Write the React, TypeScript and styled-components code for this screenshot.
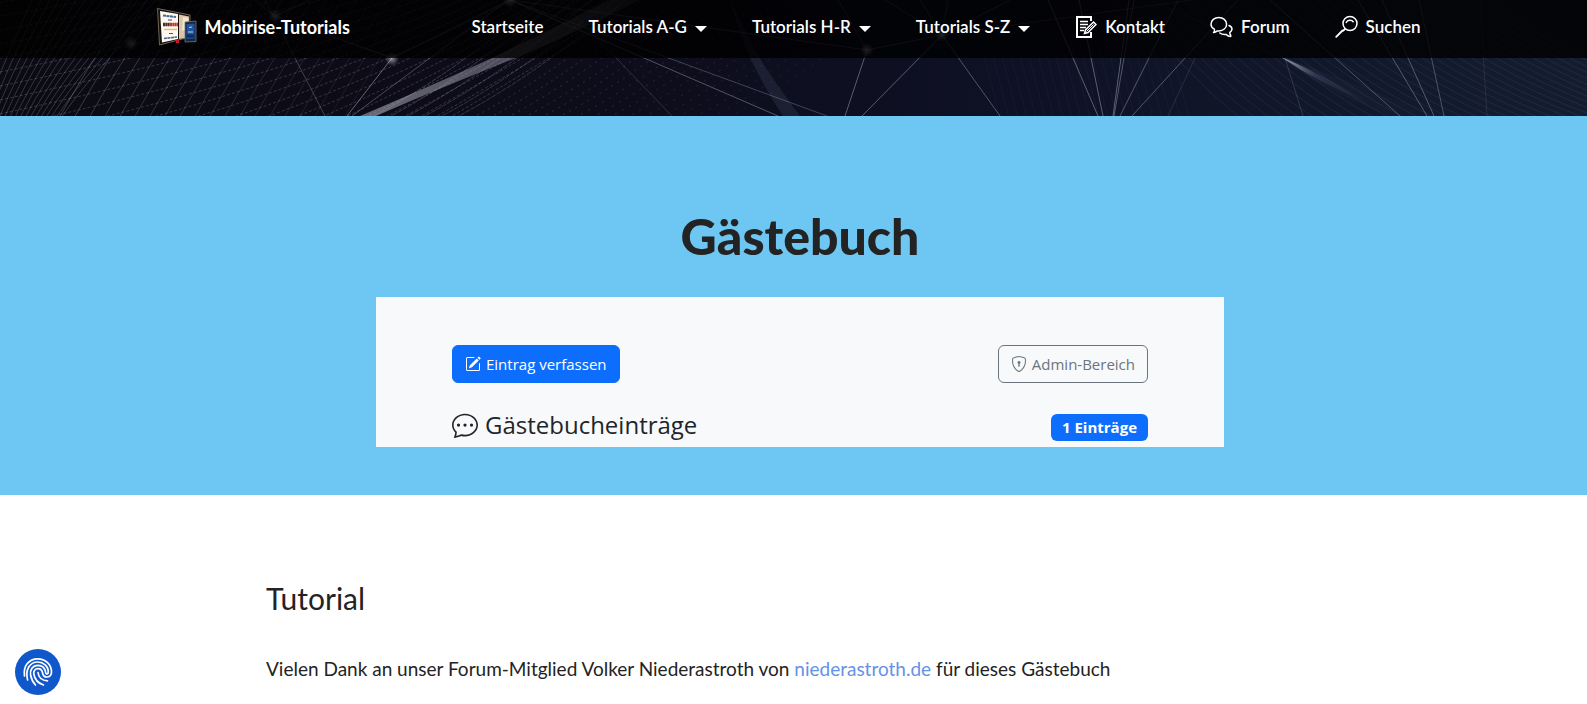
import React from "react";
import styled, { createGlobalStyle } from "styled-components";
import { BsPencilSquare, BsShieldLock, BsChatDots } from "react-icons/bs";

const GlobalStyle = createGlobalStyle`
  *, *::before, *::after { box-sizing: border-box; }
  body {
    margin: 0;
    background: #ffffff;
    color: #232323;
    font-family: Lato, "Liberation Sans", sans-serif;
  }
  a { text-decoration: none; }
`;

const Header = styled.header`
  position: relative;
  overflow: hidden;
  padding-bottom: 58px;
  background: #0e1020;
`;

const Backdrop = styled.svg`
  position: absolute;
  inset: 0;
  width: 100%;
  height: 100%;
`;

const Navbar = styled.nav`
  position: relative;
  height: 58px;
  padding: 0 12px;
  background: rgba(0, 0, 0, 0.8);
`;

const NavInner = styled.div`
  display: flex;
  align-items: center;
  justify-content: space-between;
  max-width: 1274px;
  height: 54px;
  margin: 0 auto;
  padding-right: 10px;
`;

const Brand = styled.a`
  display: flex;
  align-items: center;
  gap: 8px;
  color: #ffffff;
  font-size: 18px;
  font-weight: 700;
  line-height: 24px;
  white-space: nowrap;
`;

const NavList = styled.ul`
  display: flex;
  align-items: center;
  gap: 45px;
  margin: 0;
  padding: 0;
  list-style: none;
`;

const NavLink = styled.a`
  display: flex;
  align-items: center;
  gap: 8px;
  color: #ffffff;
  font-size: 17px;
  font-weight: 600;
  line-height: 24px;
  white-space: nowrap;
`;

const Caret = styled.span`
  border: 6px solid transparent;
  border-top-color: #ffffff;
  border-bottom: 0;
  margin-top: 4px;
`;

const Guestbook = styled.section`
  display: flex;
  flex-direction: column;
  align-items: center;
  gap: 28px;
  padding: 88px 12px 48px 25px;
  background: #6ec6f3;
`;

const Title = styled.h1`
  margin: 0;
  font-size: 50px;
  font-weight: 900;
  line-height: 65px;
`;

const Card = styled.div`
  display: flex;
  flex-direction: column;
  gap: 26px;
  width: 100%;
  max-width: 848px;
  padding: 48px 76px 6px;
  background: #f8f9fa;
  color: #212529;
  font-family: "Open Sans", "Noto Sans", sans-serif;
`;

const CardRow = styled.div`
  display: flex;
  align-items: flex-end;
  justify-content: space-between;
`;

const Button = styled.button<{ $outline?: boolean }>`
  display: flex;
  align-items: center;
  gap: 5px;
  height: 38px;
  padding: 0 12px;
  border: 1px solid ${(p) => (p.$outline ? "#6c757d" : "#0d6efd")};
  border-radius: 6px;
  background: ${(p) => (p.$outline ? "transparent" : "#0d6efd")};
  color: ${(p) => (p.$outline ? "#6c757d" : "#ffffff")};
  font-family: inherit;
  font-size: 15px;
  line-height: 24px;
  white-space: nowrap;
`;

const EntriesHeading = styled.h2`
  display: flex;
  align-items: center;
  gap: 7px;
  margin: 0;
  font-size: 24px;
  font-weight: 400;
  line-height: 32px;
`;

const Badge = styled.span`
  padding: 0 11px;
  border-radius: 6px;
  background: #0d6efd;
  color: #ffffff;
  font-size: 15px;
  font-weight: 700;
  line-height: 27px;
`;

const Tutorial = styled.main`
  max-width: 1079px;
  margin: 0 auto;
  padding: 82px 12px 16px;
`;

const TutorialTitle = styled.h2`
  margin: 0 0 36px;
  font-size: 30px;
  font-weight: 400;
  line-height: 42px;
`;

const Text = styled.p`
  margin: 0;
  font-size: 19px;
  line-height: 28px;
`;

const TextLink = styled.a`
  color: #6592e6;
`;

const PrivacyButton = styled.button`
  position: fixed;
  left: 15px;
  bottom: 9px;
  width: 46px;
  height: 46px;
  padding: 0;
  border: 0;
  border-radius: 50%;
  background: #1157cc;
`;

type Seg = [number, number, number, number, number];

const rays: Seg[] = [
  [265, 0, 325, 116, 0.3],
  [392, 58, 347, 116, 0.5],
  [508, 0, 352, 116, 0.35],
  [392, 58, 275, 16, 0.35],
  [392, 58, 510, 0, 0.35],
  [275, 16, 255, 0, 0.3],
  [275, 16, 310, 0, 0.3],
  [510, 0, 778, 116, 0.4],
  [510, 0, 827, 116, 0.3],
  [510, 0, 867, 50, 0.3],
  [560, 0, 672, 116, 0.2],
  [867, 50, 845, 116, 0.45],
  [867, 50, 838, 0, 0.3],
  [867, 50, 942, 35, 0.3],
  [942, 35, 862, 116, 0.45],
  [942, 35, 1000, 116, 0.4],
  [942, 35, 885, 0, 0.3],
  [942, 35, 920, 0, 0.3],
  [942, 35, 948, 0, 0.3],
  [942, 35, 1010, 0, 0.3],
  [942, 35, 1220, -4, 0.25],
  [1048, 0, 1098, 116, 0.45],
  [1079, 0, 1103, 116, 0.45],
  [1129, 0, 1113, 116, 0.45],
  [1134, 0, 1114, 116, 0.4],
  [1178, 0, 1120, 116, 0.4],
  [1238, 0, 1132, 116, 0.4],
  [1195, 58, 1168, 116, 0.15],
  [1270, 0, 1400, 116, 0.35],
  [1358, 0, 1427, 116, 0.4],
  [1382, 0, 1434, 116, 0.4],
  [1419, 0, 1444, 116, 0.35],
  [1285, 58, 1303, 116, 0.2],
  [1480, 0, 1487, 116, 0.12],
];

const range = (n: number) => Array.from({ length: n }, (_, i) => i);

function NetworkBackdrop() {
  return (
    <Backdrop viewBox="0 0 1587 116" preserveAspectRatio="xMidYMid slice" aria-hidden="true">
      <defs>
        <linearGradient id="base">
          <stop offset="0" stopColor="#0b0b13" />
          <stop offset="0.35" stopColor="#0d0c19" />
          <stop offset="0.6" stopColor="#0e1023" />
          <stop offset="1" stopColor="#141d30" />
        </linearGradient>
        <linearGradient id="beam" x1="0" x2="1">
          <stop offset="0" stopColor="#b4b4c4" stopOpacity="0.55" />
          <stop offset="0.6" stopColor="#a0a0b4" stopOpacity="0.42" />
          <stop offset="1" stopColor="#a0a0b4" stopOpacity="0.2" />
        </linearGradient>
        <linearGradient id="flare">
          <stop offset="0" stopColor="#ccd2e6" stopOpacity="0.75" />
          <stop offset="0.4" stopColor="#7884a4" stopOpacity="0.22" />
          <stop offset="1" stopColor="#56648a" stopOpacity="0" />
        </linearGradient>
        <radialGradient id="node">
          <stop offset="0" stopColor="#ffffff" stopOpacity="0.5" />
          <stop offset="1" stopColor="#ffffff" stopOpacity="0" />
        </radialGradient>
      </defs>
      <rect width="1587" height="116" fill="url(#base)" />
      <g fill="none" stroke="#a9adc4">
        {range(16).map((i) => (
          <path key={i} d={`M${i * 5 - 18} 124Q${i * 6 - 4} 78 ${i * 9 + 34} -4`} strokeOpacity="0.26" />
        ))}
        {range(20).map((i) => (
          <path key={i} d={`M${i * 15 + 58} 120Q${i * 15 + 82} 76 ${i * 15 + 132} 0`} strokeOpacity={0.3 - i * 0.011} />
        ))}
        {range(24).map((i) => (
          <path
            key={i}
            d={`M-10 ${i * 14 + 4}Q190 ${i * 13 - 30} 360 ${i * 10 - 60}T620 ${i * 8 - 170}`}
            strokeOpacity="0.26"
            strokeDasharray="3 2"
          />
        ))}
        {range(22).map((i) => (
          <path
            key={i}
            d={`M${i * 17 + 370} 118Q${i * 17 + 450} 76 ${i * 17 + 540} 0`}
            strokeOpacity={0.3 - i * 0.009}
            strokeDasharray={i < 6 ? "5 1" : `2 ${3 + Math.floor(i / 4)}`}
          />
        ))}
        {range(34).map((i) => (
          <path key={i} d={`M${i * 11 + 1130} 0Q${i * 12 + 1180} 70 ${i * 15 + 1240} 118`} stroke="#586680" strokeOpacity="0.18" />
        ))}
        {range(22).map((i) => (
          <path key={i} d={`M${i * 9 + 980} 40L${i * 9 + 1000} 118`} stroke="#586680" strokeOpacity="0.1" />
        ))}
      </g>
      <path d="M360 116Q440 82 492 58L610 0H640Q570 35 516 58Q450 84 376 116Z" fill="url(#beam)" />
      <path d="M730 0Q745 60 783 116H800Q770 76 755 50Z" fill="#8c96be" fillOpacity="0.12" />
      <path d="M1150 0L1283 57Q1370 90 1440 116H1390Q1320 88 1281 58Z" fill="url(#flare)" fillOpacity="0.4" />
      <path d="M1281 57Q1310 68 1370 103Q1320 84 1281 57Z" fill="url(#flare)" />
      {rays.map(([x1, y1, x2, y2, o], i) => (
        <line key={i} x1={x1} y1={y1} x2={x2} y2={y2} stroke="#b9bccd" strokeOpacity={o} />
      ))}
      {[[392, 59], [275, 16], [510, 1], [867, 50], [942, 35], [131, 43]].map(([x, y]) => (
        <circle key={x} cx={x} cy={y} r="7" fill="url(#node)" />
      ))}
    </Backdrop>
  );
}

const BrandLogo = () => (
  <svg width="40" height="40" viewBox="0 0 40 40" aria-hidden="true">
    <path d="M0.500 1.500L33 8v22L2.500 38Z" fill="#15110f" stroke="#8b7b66" strokeWidth="0.8" />
    <path d="M3 4L21 7v25L5 35.500Z" fill="#fff8ec" />
    <path d="M22 7.500L32 9.500v21L22 32Z" fill="#dcc4a4" />
    <path d="M26 10L31 11v10L25 24Z" fill="#f2e4cf" />
    <g fill="none">
      <path d="M6 8.500l13 1.500" stroke="#4a6599" strokeWidth="2" strokeDasharray="3 0.500" />
      <path d="M11 13h4" stroke="#56616f" strokeWidth="1.200" />
      <path d="M6 17.500h7" stroke="#3b3234" strokeWidth="3.500" strokeDasharray="2 0.300" />
      <path d="M13 17.500h8" stroke="#cc2f32" strokeWidth="3.500" strokeDasharray="2 0.300" />
      <path d="M7 22.500h13" stroke="#e9b877" strokeWidth="1.400" />
      <path d="M12 26.500h4" stroke="#556" strokeWidth="1" />
      <path d="M7 31.500l13-1.500" stroke="#4a6599" strokeWidth="1.600" strokeDasharray="3 0.500" />
    </g>
    <path d="M19 33h3v3h-3Z" fill="#d21522" />
    <path d="M28 15L39 14v20.500L28 35Z" fill="#17263c" stroke="#68788e" strokeWidth="0.800" />
    <path d="M29.500 17L37.500 16.500v15L29.500 32Z" fill="#1e559f" />
    <path d="M32 20.500l3-.5M31 25h5" stroke="#bcd5ef" strokeWidth="1" />
    <path d="M30 29h7" stroke="#0d2c60" strokeWidth="3" />
  </svg>
);

const ContactIcon = () => (
  <svg width="22" height="24" viewBox="0 0 22 24" fill="none" stroke="#ffffff" aria-hidden="true">
    <path d="M16 6V2H2v20h14v-5" strokeWidth="2" />
    <path d="M5 6.500h8M5 9.500h8M5 12.500h6M5 15.500h4" strokeWidth="1.500" />
    <path d="M18.500 7L21 9.500L13 17.500L9.500 18.500L10.500 15Z" strokeWidth="1.500" />
    <path d="M11.500 16.500L18.500 9.500" strokeWidth="1" />
  </svg>
);

const ForumIcon = () => (
  <svg width="23" height="24" viewBox="0 0 23 24" fill="none" stroke="#ffffff" strokeWidth="1.500" strokeLinejoin="round" strokeLinecap="round" aria-hidden="true">
    <path d="M3.500 17.500c1-.8 1.300-2 .9-3.300C2 13 1 11.200 1 9.200 1 5.300 4.500 2.500 8.800 2.500s7.800 2.800 7.800 6.700-3.500 6.700-7.800 6.700h-1.500c-1 1-2.200 1.600-3.800 1.600Z" />
    <path d="M19 10.500c1.900.8 3 2 3 3.600 0 1.400-.8 2.600-2.200 3.400-.1 1.200.3 2 .9 2.800v1.200c-2 0-3.500-.8-4.500-2-2.500.3-4.800-.2-6.400-1.500" />
  </svg>
);

const SearchIcon = () => (
  <svg width="23" height="24" viewBox="0 0 23 24" fill="none" stroke="#ffffff" strokeWidth="1.500" strokeLinecap="round" aria-hidden="true">
    <circle cx="15" cy="8.500" r="7" />
    <path d="M11.200 7.500c1.300-2.800 5.400-3 7-.8" />
    <path d="M10 14L8 15.800M7.500 15.500L1.200 21.800" strokeWidth="1.800" />
  </svg>
);

const FingerprintIcon = () => (
  <svg width="46" height="46" viewBox="0 0 46 46" fill="none" stroke="#ffffff" strokeWidth="1.700" strokeLinecap="round" aria-hidden="true">
    <path d="M9.500 27C8 17.500 13.500 9.800 22.800 9.800C30.500 9.800 36.500 15.700 36.500 22.800C36.500 29.300 28.500 29.700 27.600 24C27.200 21.300 25.500 19.600 23 19.600C20 19.600 18.300 22 18.800 25C19.700 30.500 23 34.200 28.500 36" />
    <path d="M12.600 31C10 21 14.500 13 22.800 13C28.500 13 33.200 17.300 33.300 22.500C33.300 25.600 31.100 25.600 30.700 23.500C30 19.300 27.300 16.300 23 16.300C17.500 16.300 14.800 21 15.600 26C16.300 30 17.600 33 20.500 36" />
    <path d="M23 23.500C23.600 28.300 27 31.600 32.500 31.800" />
  </svg>
);

const navItems: { label: string; menu?: boolean; icon?: React.ReactNode }[] = [
  { label: "Startseite" },
  { label: "Tutorials A-G", menu: true },
  { label: "Tutorials H-R", menu: true },
  { label: "Tutorials S-Z", menu: true },
  { label: "Kontakt", icon: <ContactIcon /> },
  { label: "Forum", icon: <ForumIcon /> },
  { label: "Suchen", icon: <SearchIcon /> },
];

export default function App() {
  return (
    <>
      <GlobalStyle />
      <Header>
        <NetworkBackdrop />
        <Navbar>
          <NavInner>
            <Brand href="#">
              <BrandLogo />
              Mobirise-Tutorials
            </Brand>
            <NavList>
              {navItems.map(({ label, menu, icon }) => (
                <li key={label}>
                  <NavLink href="#">
                    {icon}
                    {label}
                    {menu && <Caret />}
                  </NavLink>
                </li>
              ))}
            </NavList>
          </NavInner>
        </Navbar>
      </Header>
      <Guestbook>
        <Title>Gästebuch</Title>
        <Card>
          <CardRow>
            <Button type="button">
              <BsPencilSquare size={16} />
              Eintrag verfassen
            </Button>
            <Button type="button" $outline>
              <BsShieldLock size={16} />
              Admin-Bereich
            </Button>
          </CardRow>
          <CardRow>
            <EntriesHeading>
              <BsChatDots size={26} />
              Gästebucheinträge
            </EntriesHeading>
            <Badge>1 Einträge</Badge>
          </CardRow>
        </Card>
      </Guestbook>
      <Tutorial>
        <TutorialTitle>Tutorial</TutorialTitle>
        <Text>
          Vielen Dank an unser Forum-Mitglied Volker Niederastroth von{" "}
          <TextLink href="#">niederastroth.de</TextLink> für dieses Gästebuch
        </Text>
      </Tutorial>
      <PrivacyButton type="button" aria-label="Datenschutz-Einstellungen">
        <FingerprintIcon />
      </PrivacyButton>
    </>
  );
}
